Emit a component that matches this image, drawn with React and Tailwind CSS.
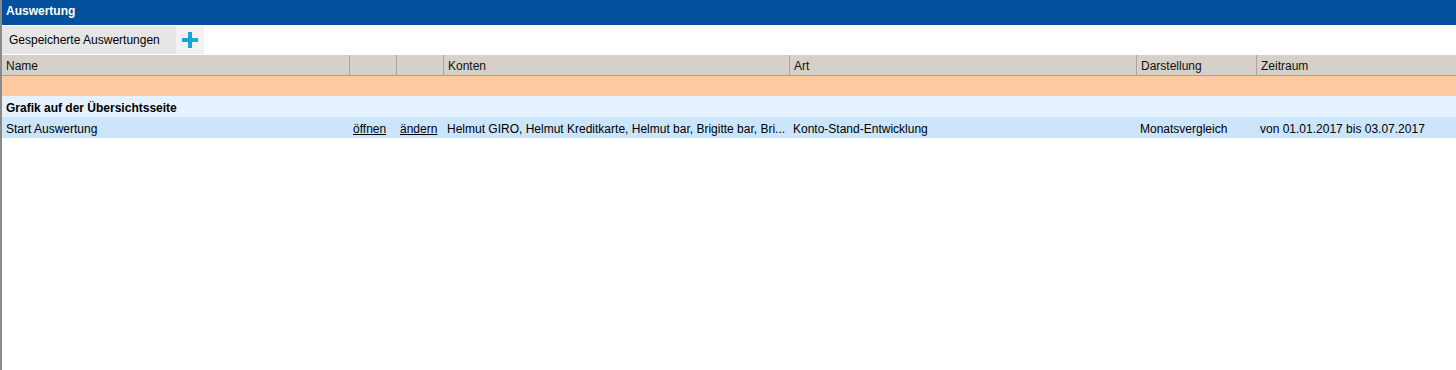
import React from "react";

const cols = "grid-cols-[347px_47px_47px_346px_347px_120px_1fr]";

function Head({ children, first }) {
  return (
    <div className={`h-full flex items-center px-[4px] pt-[1px] ${first ? "" : "border-l border-[#aaa69f]"}`}>
      {children}
    </div>
  );
}

function Cell({ children, className = "" }) {
  return <div className={`h-full flex items-center px-[4px] pt-[2px] whitespace-nowrap overflow-hidden ${className}`}>{children}</div>;
}

export default function App() {
  return (
    <div className="w-[1456px] h-[370px] bg-white text-[12px] text-black border-l-2 border-[#8a8a8a] flex flex-col" style={{ fontFamily: '"Liberation Sans", Arial, sans-serif' }}>
      {/* Titelleiste */}
      <div className="h-[25px] bg-[#04509c] text-white font-bold flex items-start pt-[2px] px-[4px]">Auswertung</div>

      {/* Tabs */}
      <div className="h-[29px] flex items-stretch pt-[1px]">
        <div className="bg-[#e6e6e6] flex items-center px-[7px] w-[174px]">Gespeicherte Auswertungen</div>
        <button className="bg-[#f2f2f2] w-[28px] flex items-center justify-center">
          <svg width="16" height="16" viewBox="0 0 16 16">
            <rect x="6" y="0" width="4" height="16" fill="#1aa5d6" />
            <rect x="0" y="6" width="16" height="4" fill="#1aa5d6" />
          </svg>
        </button>
      </div>

      {/* Tabelle */}
      <div className="mt-[1px]">
        <div className={`grid ${cols} h-[21px] bg-[#d5d1c9] border-b border-[#a7a39b] text-[#111]`}>
          <Head first>Name</Head>
          <Head />
          <Head />
          <Head>Konten</Head>
          <Head>Art</Head>
          <Head>Darstellung</Head>
          <Head>Zeitraum</Head>
        </div>
        <div className="h-[20px] bg-[#fecba0]" />
        <div className="h-[21px] bg-[#e5f1fc] flex items-center px-[4px] pt-[2px] font-bold">Grafik auf der Übersichtsseite</div>
        <div className={`grid ${cols} h-[21px] bg-[#cce5fb]`}>
          <Cell>Start Auswertung</Cell>
          <Cell><a className="underline cursor-pointer">öffnen</a></Cell>
          <Cell><a className="underline cursor-pointer">ändern</a></Cell>
          <Cell>Helmut GIRO, Helmut Kreditkarte, Helmut bar, Brigitte bar, Bri...</Cell>
          <Cell>Konto-Stand-Entwicklung</Cell>
          <Cell>Monatsvergleich</Cell>
          <Cell>von 01.01.2017 bis 03.07.2017</Cell>
        </div>
      </div>
    </div>
  );
}
